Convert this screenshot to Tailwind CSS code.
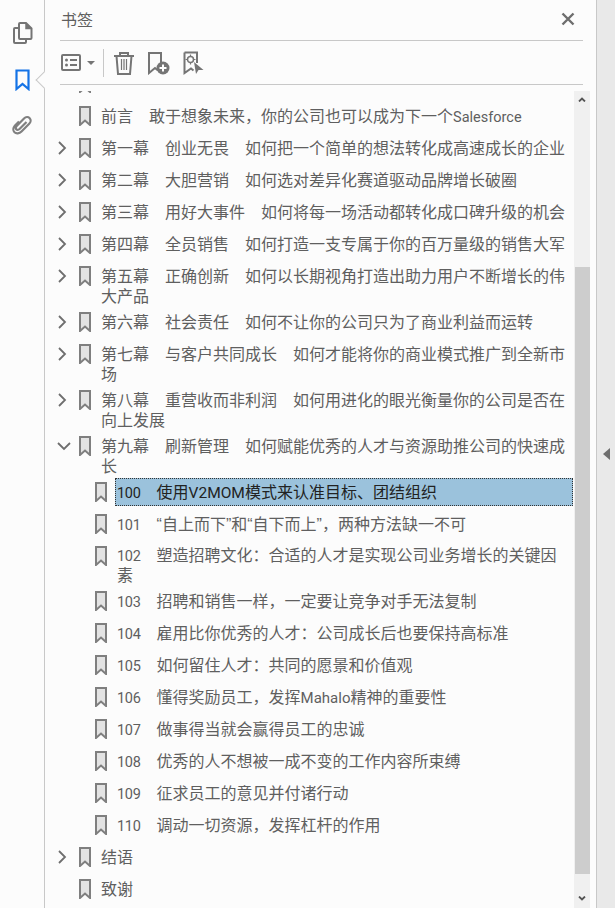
<!DOCTYPE html>
<html lang="zh-CN">
<head>
    <meta charset="UTF-8">
    <title>书签</title>
    <script src="https://cdn.jsdelivr.net/npm/@tailwindcss/browser@4"></script>
</head>
<body class="bg-[#fcfcfc] overflow-hidden">
    <svg class="hidden">
        <symbol id="bm" viewBox="0 0 12 20"><path d="M1 1H11V19L6 14.500L1 19Z" fill="#e3e3e3" stroke="#7f7f7f" stroke-width="2"/></symbol>
        <symbol id="open" viewBox="0 0 10 16"><path d="M2 2L8 8L2 14" fill="none" stroke="#6e6e6e" stroke-width="1.800"/></symbol>
        <symbol id="shut" viewBox="0 0 16 10"><path d="M2 2L8 8L14 2" fill="none" stroke="#6e6e6e" stroke-width="1.800"/></symbol>
    </svg>
    <div class="flex h-[908px] w-[615px] font-['Noto_Sans_CJK_SC','Microsoft_YaHei',sans-serif] text-[16px] text-[#5f5f5f]">

        <!-- left rail -->
        <div class="relative w-[45px] shrink-0 border-r border-[#c8c8c8] flex flex-col items-center pt-[22px]">
            <svg width="20" height="22" viewBox="0 0 20 22" fill="none" stroke="#757575" stroke-width="2" class="ml-px"><path d="M6 6H2a1 1 0 0 0-1 1V20a1 1 0 0 0 1 1H12a1 1 0 0 0 1-1V17"/><path d="M6 2a1 1 0 0 1 1-1H13L18.500 6.500V16a1 1 0 0 1-1 1H7a1 1 0 0 1-1-1Z"/><path d="M13 1V6.500H18.500" fill="#757575" stroke-width="1.500"/></svg>
            <svg width="15" height="22" viewBox="0 0 15 22" fill="none" stroke="#1473e6" stroke-width="2.200" class="mt-[25px]"><path d="M1.500 1.500H13.500V20L7.500 15L1.500 20Z"/></svg>
            <svg width="20" height="20" viewBox="0 0 20 20" fill="none" stroke="#808080" stroke-width="2.200" class="mt-[24px]"><path d="M14.500 7L7.500 14C6.300 15.200 4.800 15 4.200 14.300C3.500 13.500 3.500 12.300 4.700 11L12 3.500C13.800 1.800 16.300 1.800 17.700 3.200C19.200 4.800 18.800 7.200 17.200 8.800L9.500 16.500C7.300 18.800 4.200 19 2.500 17.300C.8 15.500 1 12.600 2.800 10.700L7 6.500"/></svg>
            <div class="absolute left-[38px] top-[74px] w-[12px] h-[12px] rotate-45 bg-[#fcfcfc] border-l border-b border-[#c8c8c8]"></div>
        </div>

        <!-- bookmarks panel -->
        <div class="flex-1 min-w-0 flex flex-col">
            <div class="h-[41px] shrink-0 ml-[15px] mr-[13px] border-b border-[#c8c8c8] flex items-center justify-between pb-[3px] pl-[1px]">
                <span>书签</span>
                <svg width="14" height="14" viewBox="0 0 14 14" class="mr-[8px]" stroke="#6e6e6e" stroke-width="2.400"><path d="M1.500 1.500L12.500 12.500M12.500 1.500L1.500 12.500"/></svg>
            </div>
            <div class="h-[44px] shrink-0 ml-[15px] mr-[13px] border-b border-[#c8c8c8] flex items-center">
                <svg width="21" height="18" viewBox="0 0 21 18" class="ml-[1px]" fill="none" stroke="#757575" stroke-width="2"><rect x="1" y="1" width="18" height="15" rx="1"/><path d="M9 6H16M9 11H16" stroke-width="1.800"/><circle cx="5.500" cy="6" r="1.500" fill="#757575" stroke="none"/><circle cx="5.500" cy="11" r="1.500" fill="#757575" stroke="none"/></svg>
                <svg width="8" height="4" viewBox="0 0 8 4" class="ml-[5px]"><path d="M0 0H8L4 4Z" fill="#757575"/></svg>
                <div class="w-px h-[28px] bg-[#c8c8c8] ml-[8px]"></div>
                <svg width="22" height="24" viewBox="0 0 22 24" class="ml-[9px]" fill="none" stroke="#757575" stroke-width="2"><path d="M1 5H21M7 5V2H15V5M3.500 5L5 23H17L18.500 5"/><path d="M8.500 8V19M11 8V19M13.500 8V19" stroke-width="1.200"/></svg>
                <svg width="23" height="24" viewBox="0 0 23 24" class="ml-[12px]"><path d="M14 14V2H2V22L8 17L11 19.500" fill="none" stroke="#757575" stroke-width="2"/><circle cx="16" cy="17" r="6.500" fill="#757575"/><path d="M12.500 17H19.500M16 13.500V20.500" stroke="#fff" stroke-width="2"/></svg>
                <svg width="21" height="24" viewBox="0 0 21 24" class="ml-[13px]"><path d="M1.500 1.500H14V12M1.500 1.500V22L8 17.500L10.500 19.500" fill="none" stroke="#757575" stroke-width="2"/><circle cx="7.500" cy="8.500" r="3" fill="none" stroke="#757575" stroke-width="1.500"/><path d="M7.500 3.500V5M7.500 12V13.500M2.500 8.500H4M11 8.500H12.500" stroke="#757575" stroke-width="1.200"/><path d="M11 11L20.500 19H15.500L13 23Z" fill="#757575"/></svg>
            </div>

            <div class="flex flex-1 min-h-0 pt-[6px] pr-[6px]">
                <!-- list -->
                <div class="flex-1 min-w-0 overflow-hidden">
                    <div class="-mt-[23px]">
                        <div class="flex min-h-[32px] pl-[34px] pt-[5px]"><svg class="w-[12px] h-[20px] shrink-0"><use href="#bm"/></svg></div>
                        <div class="flex min-h-[32px] pt-[5px] pl-[34px]"><svg class="w-[12px] h-[20px] shrink-0 mt-px"><use href="#bm"/></svg><div class="ml-[10px] leading-[20px] pb-px">前言　敢于想象未来，你的公司也可以成为下一个<span class="font-['Roboto'] text-[14.5px] leading-none">Salesforce</span></div></div>
                        <div class="flex min-h-[32px] pt-[5px] pl-[12px]"><svg class="w-[10px] h-[16px] mt-[3px] mr-[12px] shrink-0"><use href="#open"/></svg><svg class="w-[12px] h-[20px] shrink-0 mt-px"><use href="#bm"/></svg><div class="ml-[10px] leading-[20px] pb-px">第一幕　创业无畏　如何把一个简单的想法转化成高速成长的企业</div></div>
                        <div class="flex min-h-[32px] pt-[5px] pl-[12px]"><svg class="w-[10px] h-[16px] mt-[3px] mr-[12px] shrink-0"><use href="#open"/></svg><svg class="w-[12px] h-[20px] shrink-0 mt-px"><use href="#bm"/></svg><div class="ml-[10px] leading-[20px] pb-px">第二幕　大胆营销　如何选对差异化赛道驱动品牌增长破圈</div></div>
                        <div class="flex min-h-[32px] pt-[5px] pl-[12px]"><svg class="w-[10px] h-[16px] mt-[3px] mr-[12px] shrink-0"><use href="#open"/></svg><svg class="w-[12px] h-[20px] shrink-0 mt-px"><use href="#bm"/></svg><div class="ml-[10px] leading-[20px] pb-px">第三幕　用好大事件　如何将每一场活动都转化成口碑升级的机会</div></div>
                        <div class="flex min-h-[32px] pt-[5px] pl-[12px]"><svg class="w-[10px] h-[16px] mt-[3px] mr-[12px] shrink-0"><use href="#open"/></svg><svg class="w-[12px] h-[20px] shrink-0 mt-px"><use href="#bm"/></svg><div class="ml-[10px] leading-[20px] pb-px">第四幕　全员销售　如何打造一支专属于你的百万量级的销售大军</div></div>
                        <div class="flex min-h-[32px] pt-[5px] pl-[12px]"><svg class="w-[10px] h-[16px] mt-[3px] mr-[12px] shrink-0"><use href="#open"/></svg><svg class="w-[12px] h-[20px] shrink-0 mt-px"><use href="#bm"/></svg><div class="ml-[10px] leading-[20px] pb-px">第五幕　正确创新　如何以长期视角打造出助力用户不断增长的伟大产品</div></div>
                        <div class="flex min-h-[32px] pt-[5px] pl-[12px]"><svg class="w-[10px] h-[16px] mt-[3px] mr-[12px] shrink-0"><use href="#open"/></svg><svg class="w-[12px] h-[20px] shrink-0 mt-px"><use href="#bm"/></svg><div class="ml-[10px] leading-[20px] pb-px">第六幕　社会责任　如何不让你的公司只为了商业利益而运转</div></div>
                        <div class="flex min-h-[32px] pt-[5px] pl-[12px]"><svg class="w-[10px] h-[16px] mt-[3px] mr-[12px] shrink-0"><use href="#open"/></svg><svg class="w-[12px] h-[20px] shrink-0 mt-px"><use href="#bm"/></svg><div class="ml-[10px] leading-[20px] pb-px">第七幕　与客户共同成长　如何才能将你的商业模式推广到全新市场</div></div>
                        <div class="flex min-h-[32px] pt-[5px] pl-[12px]"><svg class="w-[10px] h-[16px] mt-[3px] mr-[12px] shrink-0"><use href="#open"/></svg><svg class="w-[12px] h-[20px] shrink-0 mt-px"><use href="#bm"/></svg><div class="ml-[10px] leading-[20px] pb-px">第八幕　重营收而非利润　如何用进化的眼光衡量你的公司是否在向上发展</div></div>
                        <div class="flex min-h-[32px] pt-[5px] pl-[11px]"><svg class="w-[16px] h-[10px] mt-[6px] mr-[7px] shrink-0"><use href="#shut"/></svg><svg class="w-[12px] h-[20px] shrink-0 mt-px"><use href="#bm"/></svg><div class="ml-[10px] leading-[20px] pb-px">第九幕　刷新管理　如何赋能优秀的人才与资源助推公司的快速成长</div></div>

                        <div class="flex h-[32px] pl-[50px] items-center"><svg class="w-[12px] h-[20px] shrink-0"><use href="#bm"/></svg><div class="ml-[8px] pl-px flex-1 h-[28px] leading-[24px] bg-[#9bc2dc] border border-dotted border-[#333] text-[#222]"><span class="font-['Roboto'] text-[14.5px] tracking-[-0.3px] leading-none">100</span>　使用<span class="font-['Roboto'] text-[15.5px] leading-none">V2MOM</span>模式来认准目标、团结组织</div></div>
                        <div class="flex min-h-[32px] pt-[5px] pl-[50px]"><svg class="w-[12px] h-[20px] shrink-0 mt-px"><use href="#bm"/></svg><div class="ml-[10px] leading-[20px] pb-px"><span class="font-['Roboto'] text-[14.5px] tracking-[-0.3px] leading-none">101</span>　<span class="font-['Liberation_Sans'] leading-none">“</span>自上而下<span class="font-['Liberation_Sans'] leading-none">”</span>和<span class="font-['Liberation_Sans'] leading-none">“</span>自下而上<span class="font-['Liberation_Sans'] leading-none">”</span>，两种方法缺一不可</div></div>
                        <div class="flex h-[45px] pt-[5px] pl-[50px] pr-[4px]"><svg class="w-[12px] h-[20px] shrink-0 mt-px"><use href="#bm"/></svg><div class="ml-[10px] leading-[19px]"><span class="font-['Roboto'] text-[14.5px] tracking-[-0.3px] leading-none">102</span>　塑造招聘文化：合适的人才是实现公司业务增长的关键因素</div></div>
                        <div class="flex min-h-[32px] pt-[5px] pl-[50px]"><svg class="w-[12px] h-[20px] shrink-0 mt-px"><use href="#bm"/></svg><div class="ml-[10px] leading-[20px] pb-px"><span class="font-['Roboto'] text-[14.5px] tracking-[-0.3px] leading-none">103</span>　招聘和销售一样，一定要让竞争对手无法复制</div></div>
                        <div class="flex min-h-[32px] pt-[5px] pl-[50px]"><svg class="w-[12px] h-[20px] shrink-0 mt-px"><use href="#bm"/></svg><div class="ml-[10px] leading-[20px] pb-px"><span class="font-['Roboto'] text-[14.5px] tracking-[-0.3px] leading-none">104</span>　雇用比你优秀的人才：公司成长后也要保持高标准</div></div>
                        <div class="flex min-h-[32px] pt-[5px] pl-[50px]"><svg class="w-[12px] h-[20px] shrink-0 mt-px"><use href="#bm"/></svg><div class="ml-[10px] leading-[20px] pb-px"><span class="font-['Roboto'] text-[14.5px] tracking-[-0.3px] leading-none">105</span>　如何留住人才：共同的愿景和价值观</div></div>
                        <div class="flex min-h-[32px] pt-[5px] pl-[50px]"><svg class="w-[12px] h-[20px] shrink-0 mt-px"><use href="#bm"/></svg><div class="ml-[10px] leading-[20px] pb-px"><span class="font-['Roboto'] text-[14.5px] tracking-[-0.3px] leading-none">106</span>　懂得奖励员工，发挥<span class="font-['Roboto'] text-[15px] leading-none">Mahalo</span>精神的重要性</div></div>
                        <div class="flex min-h-[32px] pt-[5px] pl-[50px]"><svg class="w-[12px] h-[20px] shrink-0 mt-px"><use href="#bm"/></svg><div class="ml-[10px] leading-[20px] pb-px"><span class="font-['Roboto'] text-[14.5px] tracking-[-0.3px] leading-none">107</span>　做事得当就会赢得员工的忠诚</div></div>
                        <div class="flex min-h-[32px] pt-[5px] pl-[50px]"><svg class="w-[12px] h-[20px] shrink-0 mt-px"><use href="#bm"/></svg><div class="ml-[10px] leading-[20px] pb-px"><span class="font-['Roboto'] text-[14.5px] tracking-[-0.3px] leading-none">108</span>　优秀的人不想被一成不变的工作内容所束缚</div></div>
                        <div class="flex min-h-[32px] pt-[5px] pl-[50px]"><svg class="w-[12px] h-[20px] shrink-0 mt-px"><use href="#bm"/></svg><div class="ml-[10px] leading-[20px] pb-px"><span class="font-['Roboto'] text-[14.5px] tracking-[-0.3px] leading-none">109</span>　征求员工的意见并付诸行动</div></div>
                        <div class="flex min-h-[32px] pt-[5px] pl-[50px]"><svg class="w-[12px] h-[20px] shrink-0 mt-px"><use href="#bm"/></svg><div class="ml-[10px] leading-[20px] pb-px"><span class="font-['Roboto'] text-[14.5px] tracking-[-0.3px] leading-none">110</span>　调动一切资源，发挥杠杆的作用</div></div>

                        <div class="flex min-h-[32px] pt-[5px] pl-[12px]"><svg class="w-[10px] h-[16px] mt-[3px] mr-[12px] shrink-0"><use href="#open"/></svg><svg class="w-[12px] h-[20px] shrink-0 mt-px"><use href="#bm"/></svg><div class="ml-[10px] leading-[20px] pb-px">结语</div></div>
                        <div class="flex min-h-[32px] pt-[5px] pl-[34px]"><svg class="w-[12px] h-[20px] shrink-0 mt-px"><use href="#bm"/></svg><div class="ml-[10px] leading-[20px] pb-px">致谢</div></div>
                    </div>
                </div>
                <!-- scrollbar -->
                <div class="w-[16px] shrink-0 ml-px bg-[#f0f0f0] flex flex-col items-center">
                    <svg width="8" height="5" viewBox="0 0 8 5" class="mt-[6px]"><path d="M1 4.500L4 1.500L7 4.500" fill="none" stroke="#555" stroke-width="1.800"/></svg>
                    <div class="w-[15px] h-[607px] bg-[#cdcdcd] mt-[165px]"></div>
                    <svg width="8" height="5" viewBox="0 0 8 5" class="mt-[22px]"><path d="M1 .5L4 3.500L7 .5" fill="none" stroke="#555" stroke-width="1.800"/></svg>
                </div>
            </div>
        </div>

        <!-- collapsed side strip -->
        <div class="w-[19px] shrink-0 bg-[#e9e9e9] border-l border-[#c8c8c8] flex items-center pl-[5px]">
            <svg width="7" height="12" viewBox="0 0 7 12" class="ml-[1px]"><path d="M7 0V12L0 6Z" fill="#6e6e6e"/></svg>
        </div>
    </div>
</body>
</html>
